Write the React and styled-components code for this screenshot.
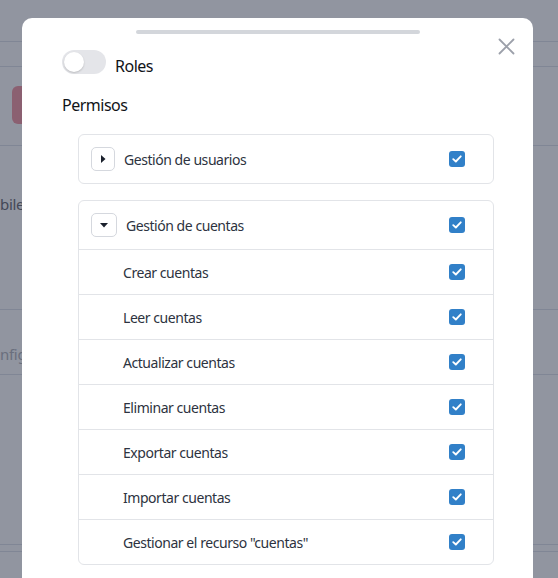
import React from 'react';
import styled, { createGlobalStyle } from 'styled-components';

const GlobalStyle = createGlobalStyle`
   * { box-sizing: border-box; }
   html, body {
      margin: 0;
      padding: 0;
      height: 100%;
      overflow: hidden;
   }
   body {
      font-family: 'Noto Sans', 'Open Sans', sans-serif;
      background: #ffffff;
      color: #1a202c;
   }
`;

const permissions = [
   'Crear cuentas',
   'Leer cuentas',
   'Actualizar cuentas',
   'Eliminar cuentas',
   'Exportar cuentas',
   'Importar cuentas',
   'Gestionar el recurso "cuentas"',
];

const CheckIcon = () => (
   <svg width='10' height='10' viewBox='0 0 12 10'>
      <polyline
         points='1.5,5.2 4.6,8 10.5,1.8'
         fill='none'
         stroke='#fff'
         strokeWidth='2.2'
         strokeLinecap='round'
         strokeLinejoin='round'
      />
   </svg>
);

const Checkbox = () => (
   <CheckBox>
      <CheckIcon />
   </CheckBox>
);

const Caret = ({ open }) => (
   <svg width='10' height='10' viewBox='0 0 10 10'>
      {open ? (
         <polygon points='1,3 9,3 5,7.5' fill='#1a202c' />
      ) : (
         <polygon points='3,1 7.5,5 3,9' fill='#1a202c' />
      )}
   </svg>
);

export default function App() {
   return (
      <>
         <GlobalStyle />
         <Page>
            <BgBar $h={42} />
            <BgBar $h={25} />
            <BgBar $h={79}>
               <BgButton />
            </BgBar>
            <BgBar $h={164}>
               <BgText $top={48}>bile.</BgText>
            </BgBar>
            <BgBar $h={65}>
               <BgText $top={34} $light>nfiguración</BgText>
            </BgBar>
            <BgBar $h={170} />
            <BgBar $h={7} />
         </Page>

         <Overlay>
            <Modal>
               <Handle />
               <CloseButton aria-label='close'>
                  <svg width='17' height='17' viewBox='0 0 17 17'>
                     <path
                        d='M1.5 1.5 L15.5 15.5 M15.5 1.5 L1.5 15.5'
                        stroke='#9ca0aa'
                        strokeWidth='1.8'
                        strokeLinecap='round'
                     />
                  </svg>
               </CloseButton>

               <SwitchRow>
                  <Switch>
                     <Knob />
                  </Switch>
                  <Label>Roles</Label>
               </SwitchRow>

               <SectionTitle>Permisos</SectionTitle>

               <Groups>
                  <Group>
                     <GroupHeader>
                        <ExpandButton $w={24}>
                           <Caret />
                        </ExpandButton>
                        <GroupName>Gestión de usuarios</GroupName>
                        <Checkbox />
                     </GroupHeader>
                  </Group>

                  <Group>
                     <GroupHeader>
                        <ExpandButton $w={26}>
                           <Caret open />
                        </ExpandButton>
                        <GroupName>Gestión de cuentas</GroupName>
                        <Checkbox />
                     </GroupHeader>
                     {permissions.map((p) => (
                        <PermRow key={p}>
                           <PermName>{p}</PermName>
                           <Checkbox />
                        </PermRow>
                     ))}
                  </Group>
               </Groups>
            </Modal>
         </Overlay>
      </>
   );
}

const Page = styled.div`
   display: flex;
   flex-direction: column;
   height: 100vh;
   background: #ffffff;
`;

const BgBar = styled.div`
   height: ${({ $h }) => $h}px;
   flex-shrink: 0;
   border-bottom: 1px solid #dfe3ea;
`;

const BgButton = styled.div`
   margin: 19px 0 0 12px;
   width: 120px;
   height: 38px;
   border-radius: 6px;
   background: #f49aa6;
`;

const BgText = styled.div`
   padding-top: ${({ $top }) => $top}px;
   font-size: 15px;
   letter-spacing: -0.3px;
   color: ${({ $light }) => ($light ? '#b4b6bc' : '#6b6c74')};
`;

const Overlay = styled.div`
   position: fixed;
   inset: 0;
   background: rgba(26, 34, 57, 0.48);
   display: flex;
   align-items: flex-start;
   padding: 18px 0 0 22px;
`;

const Modal = styled.div`
   position: relative;
   width: 511px;
   min-height: 600px;
   background: #ffffff;
   border-radius: 10px 10px 0 0;
   padding: 12px 39px 0 40px;
`;

const Handle = styled.div`
   width: 284px;
   height: 4px;
   margin: 0 auto;
   border-radius: 2px;
   background: #d3d6db;
`;

const CloseButton = styled.button`
   position: absolute;
   top: 16px;
   right: 15px;
   width: 24px;
   height: 24px;
   padding: 0;
   display: flex;
   align-items: center;
   justify-content: center;
   border: none;
   background: transparent;
`;

const SwitchRow = styled.div`
   display: flex;
   align-items: flex-start;
   gap: 9px;
   margin-top: 16px;
`;

const Switch = styled.div`
   width: 44px;
   height: 24px;
   border-radius: 12px;
   background: #e4e5e9;
   padding: 2px;
   display: flex;
   align-items: center;
`;

const Knob = styled.div`
   width: 20px;
   height: 20px;
   border-radius: 50%;
   background: #ffffff;
   box-shadow: 0 1px 2px rgba(0, 0, 0, 0.18);
`;

const Label = styled.span`
   padding-top: 4px;
   font-size: 16px;
   line-height: 24px;
   letter-spacing: -0.5px;
   color: #111318;
`;

const SectionTitle = styled.div`
   margin-top: 15px;
   font-size: 16px;
   line-height: 24px;
   letter-spacing: -0.5px;
   color: #111318;
`;

const Groups = styled.div`
   display: flex;
   flex-direction: column;
   gap: 16px;
   margin: 17px 0 0 16px;
`;

const Group = styled.div`
   border: 1px solid #e2e4e8;
   border-radius: 6px;
   overflow: hidden;
`;

const GroupHeader = styled.div`
   display: flex;
   align-items: center;
   height: 48px;
   padding: 0 28px 0 12px;
`;

const ExpandButton = styled.button`
   width: ${({ $w }) => $w}px;
   height: 24px;
   padding: 0;
   display: flex;
   align-items: center;
   justify-content: center;
   border: 1px solid #d5d8de;
   border-radius: 5px;
   background: #ffffff;
`;

const GroupName = styled.span`
   flex: 1;
   margin-left: 9px;
   font-size: 14px;
   letter-spacing: -0.45px;
   color: #2d3340;
`;

const PermRow = styled.div`
   display: flex;
   align-items: center;
   height: 45px;
   padding: 0 28px 0 44px;
   border-top: 1px solid #e2e4e8;
`;

const PermName = styled.span`
   flex: 1;
   font-size: 14px;
   letter-spacing: -0.45px;
   color: #2d3340;
`;

const CheckBox = styled.span`
   width: 16px;
   height: 16px;
   border-radius: 3px;
   background: #3180c8;
   display: flex;
   align-items: center;
   justify-content: center;
   flex-shrink: 0;
`;
